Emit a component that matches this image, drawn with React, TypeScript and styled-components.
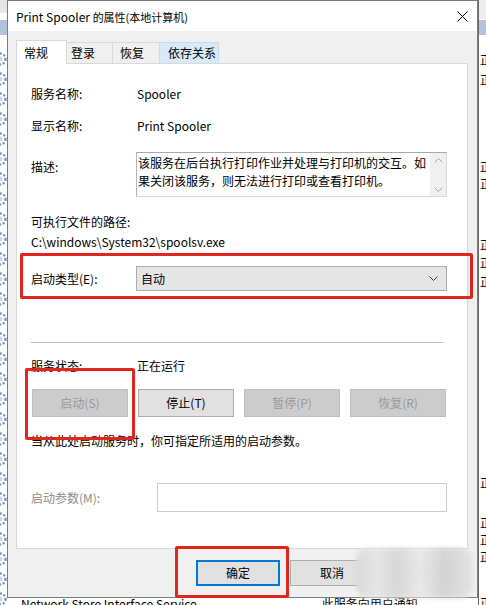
import React from "react";
import styled, { createGlobalStyle } from "styled-components";

const FONT = `"Noto Sans CJK SC", "Noto Sans", sans-serif`;

const Global = createGlobalStyle`
  html, body { margin: 0; padding: 0; background: #ffffff; overflow: hidden; }
  body { font-family: ${FONT}; font-size: 12px; color: #000; }
  * { box-sizing: border-box; }
`;

const Screen = styled.div`
  position: relative;
  width: 486px;
  height: 605px;
  display: grid;
  grid-template-columns: 7px 471px 8px;
  grid-template-rows: 598px 7px;
  overflow: hidden;
  background: #fff;
`;

/* ---------- background window strips ---------- */
const LeftStrip = styled.div`
  grid-column: 1;
  grid-row: 1 / span 2;
  display: flex;
  flex-direction: column;
  overflow: hidden;
  background: #fff;
`;
const StripTop = styled.div`
  height: 13px;
  background: #e6e6e6;
  flex: none;
`;
const StripHeader = styled.div<{ $mt: number }>`
  margin-top: ${(p) => p.$mt}px;
  height: 15px;
  background: #b3c4da;
  flex: none;
`;
const GearRow = styled.div<{ $first?: boolean }>`
  height: 20px;
  flex: none;
  display: flex;
  align-items: center;
  margin-top: ${(p) => (p.$first ? 14 : 0)}px;
  svg { margin-left: -8px; flex: none; }
`;
const RightStrip = styled.div`
  grid-column: 3;
  grid-row: 1 / span 2;
  display: flex;
  flex-direction: column;
  overflow: hidden;
  background: #fff;
  border-left: 1px solid #6b6b6b;
`;
const RightTop = styled.div`
  height: 19px;
  background: #ededed;
  flex: none;
`;
const Glyph = styled.div<{ $mt: number }>`
  margin-top: ${(p) => p.$mt}px;
  height: 16px;
  line-height: 16px;
  flex: none;
  padding-left: 1px;
  white-space: nowrap;
  font-size: 12px;
  overflow: hidden;
`;
const BottomStrip = styled.div`
  grid-column: 2;
  grid-row: 2;
  display: flex;
  align-items: flex-start;
  overflow: hidden;
  background: #fff;
  white-space: nowrap;
`;
const BottomText = styled.span<{ $ml: number }>`
  margin-top: -2px;
  margin-left: ${(p) => p.$ml}px;
  line-height: 16px;
  font-size: 12px;
  color: #000;
`;

/* ---------- dialog ---------- */
const Dialog = styled.div`
  grid-column: 2;
  grid-row: 1;
  display: flex;
  flex-direction: column;
  background: #f0f0f0;
  border: 1px solid #7d7d7d;
`;
const TitleBar = styled.div`
  height: 30px;
  flex: none;
  background: #ffffff;
  display: flex;
  align-items: center;
  padding: 0 9px 0 8px;
`;
const Title = styled.span`
  font-size: 12px;
  line-height: 16px;
  margin-top: 1px;
  white-space: nowrap;
`;
const TitleCjk = styled.span`
  font-size: 11px;
`;
const CloseBtn = styled.span`
  margin-left: auto;
  display: flex;
  width: 11px;
  height: 11px;
`;
const Body = styled.div`
  flex: 1;
  display: flex;
  flex-direction: column;
  padding: 9px 9px 0 8px;
`;
const TabRow = styled.div`
  display: flex;
  align-items: flex-end;
  height: 24px;
  margin-bottom: -1px;
  position: relative;
  z-index: 1;
`;
const Tab = styled.div<{ $w: number; $pl: number; $active?: boolean; $hover?: boolean }>`
  width: ${(p) => p.$w}px;
  padding-left: ${(p) => p.$pl}px;
  height: ${(p) => (p.$active ? 24 : 22)}px;
  display: flex;
  align-items: center;
  font-size: 12px;
  line-height: 16px;
  border: 1px solid ${(p) => (p.$hover ? "#c3dcf2" : "#d9d9d9")};
  border-bottom: ${(p) => (p.$active ? "none" : "1px solid #d9d9d9")};
  background: ${(p) => (p.$active ? "#ffffff" : p.$hover ? "#d8eaf9" : "#f0f0f0")};
  margin-right: ${(p) => (p.$active ? -3 : -1)}px;
  position: relative;
  z-index: ${(p) => (p.$active ? 2 : 1)};
`;
const Panel = styled.div`
  height: 486px;
  flex: none;
  background: #ffffff;
  border: 1px solid #d9d9d9;
  display: flex;
  flex-direction: column;
  padding-left: 14px;
`;
const Row = styled.div<{ $mt: number; $h?: number }>`
  margin-top: ${(p) => p.$mt}px;
  height: ${(p) => p.$h ?? 16}px;
  display: flex;
  align-items: ${(p) => (p.$h ? "flex-start" : "center")};
  line-height: 16px;
  white-space: nowrap;
`;
const Label = styled.span<{ $w: number; $pt?: number; $muted?: boolean }>`
  width: ${(p) => p.$w}px;
  flex: none;
  padding-top: ${(p) => p.$pt ?? 0}px;
  color: ${(p) => (p.$muted ? "#8c8c8c" : "#000")};
`;
const PlainText = styled.div<{ $mt: number }>`
  margin-top: ${(p) => p.$mt}px;
  height: 16px;
  line-height: 16px;
  white-space: nowrap;
`;
const DescBox = styled.div`
  width: 311px;
  height: 45px;
  display: flex;
  border: 1px solid #dadada;
  border-top-color: #a9a9a9;
  border-left-color: #b5b5b5;
  background: #fff;
`;
const DescText = styled.div`
  flex: 1;
  padding: 1px 0 0 1px;
  line-height: 18px;
  font-size: 12px;
  white-space: nowrap;
  overflow: hidden;
`;
const ScrollBar = styled.div`
  width: 16px;
  flex: none;
  background: #f0f0f0;
  display: flex;
  flex-direction: column;
  align-items: center;
  justify-content: space-between;
  padding: 5px 0 4px;
`;
const Combo = styled.div`
  width: 311px;
  height: 25px;
  display: flex;
  align-items: center;
  padding: 0 8px 0 4px;
  background: #e5e5e5;
  border: 1px solid #adadad;
`;
const ComboText = styled.span`
  line-height: 16px;
`;
const ComboArrow = styled.span`
  margin-left: auto;
  display: flex;
`;
const Separator = styled.div`
  margin-top: 51px;
  width: 412px;
  height: 1px;
  background: #bcbcbc;
  flex: none;
`;
const ButtonRow = styled.div`
  margin-top: 15px;
  padding-left: 1px;
  display: flex;
  gap: 10px;
`;
const Button = styled.div<{ $w: number; $h: number; $disabled?: boolean; $default?: boolean }>`
  width: ${(p) => p.$w}px;
  height: ${(p) => p.$h}px;
  display: flex;
  align-items: center;
  justify-content: center;
  font-size: 12px;
  line-height: 16px;
  color: ${(p) => (p.$disabled ? "#9a9a9a" : "#000")};
  background: ${(p) => (p.$disabled ? "#cccccc" : "#e1e1e1")};
  border: ${(p) =>
    p.$default ? "2px solid #0078d7" : p.$disabled ? "1px solid #bfbfbf" : "1px solid #adadad"};
`;
const ParamInput = styled.div`
  width: 290px;
  height: 29px;
  border: 1px solid #cccccc;
  background: #fff;
`;
const Footer = styled.div`
  display: flex;
  justify-content: flex-end;
  gap: 10px;
  padding-top: 11px;
`;

/* ---------- overlays ---------- */
const RedBox = styled.div<{ $x: number; $y: number; $w: number; $h: number }>`
  position: absolute;
  left: ${(p) => p.$x}px;
  top: ${(p) => p.$y}px;
  width: ${(p) => p.$w}px;
  height: ${(p) => p.$h}px;
  border: 3px solid #e0261f;
  border-radius: 2px;
  pointer-events: none;
`;
const Blur = styled.div`
  position: absolute;
  left: 356px;
  top: 548px;
  width: 117px;
  height: 50px;
  border-radius: 12px;
  background: linear-gradient(
    90deg,
    #dadada 0%,
    #e6e6e6 18%,
    #d8d8d8 35%,
    #e9e9e9 55%,
    #d4d4d4 75%,
    #e3e3e3 100%
  );
  filter: blur(2px);
  opacity: 0.97;
`;

const Gear = () => (
  <svg width="16" height="16" viewBox="0 0 16 16">
    <circle cx="8" cy="8" r="5.5" fill="none" stroke="#7f97b5" strokeWidth="2.4" strokeDasharray="2 1.6" />
    <circle cx="8" cy="8" r="2.5" fill="#c9d6e6" />
  </svg>
);

const Chevron = ({ up, color }: { up?: boolean; color: string }) => (
  <svg width="9" height="5" viewBox="0 0 9 5">
    <polyline
      points={up ? "0.5,4.5 4.5,0.5 8.5,4.5" : "0.5,0.5 4.5,4.5 8.5,0.5"}
      fill="none"
      stroke={color}
      strokeWidth="1"
    />
  </svg>
);

const glyphRows = [17, 4, 71, 1, 45, 2, 3, 185, 24, 1, 1, 30];

export default function App() {
  return (
    <>
      <Global />
      <Screen>
        <LeftStrip>
          <StripTop />
          <StripHeader $mt={7} />
          {Array.from({ length: 28 }).map((_, i) => (
            <GearRow key={i} $first={i === 0}>
              <Gear />
            </GearRow>
          ))}
        </LeftStrip>

        <Dialog>
          <TitleBar>
            <Title>
              Print Spooler <TitleCjk>的属性(本地计算机)</TitleCjk>
            </Title>
            <CloseBtn>
              <svg width="11" height="11" viewBox="0 0 11 11">
                <path d="M0.5 0.5 L10.5 10.5 M10.5 0.5 L0.5 10.5" stroke="#000" strokeWidth="1" />
              </svg>
            </CloseBtn>
          </TitleBar>
          <Body>
            <TabRow>
              <Tab $w={51} $pl={7} $active>常规</Tab>
              <Tab $w={49} $pl={6}>登录</Tab>
              <Tab $w={48} $pl={7}>恢复</Tab>
              <Tab $w={60} $pl={8} $hover>依存关系</Tab>
            </TabRow>
            <Panel>
              <Row $mt={22}>
                <Label $w={106}>服务名称:</Label>
                <span>Spooler</span>
              </Row>
              <Row $mt={16}>
                <Label $w={106}>显示名称:</Label>
                <span>Print Spooler</span>
              </Row>
              <Row $mt={18} $h={45}>
                <Label $w={105} $pt={7}>描述:</Label>
                <DescBox>
                  <DescText>
                    该服务在后台执行打印作业并处理与打印机的交互。如
                    <br />
                    果关闭该服务，则无法进行打印或查看打印机。
                  </DescText>
                  <ScrollBar>
                    <Chevron up color="#a6a6a6" />
                    <Chevron color="#a6a6a6" />
                  </ScrollBar>
                </DescBox>
              </Row>
              <PlainText $mt={17}>可执行文件的路径:</PlainText>
              <PlainText $mt={4}>C:\windows\System32\spoolsv.exe</PlainText>
              <Row $mt={16} $h={25}>
                <Label $w={105} $pt={5}>启动类型(E):</Label>
                <Combo>
                  <ComboText>自动</ComboText>
                  <ComboArrow>
                    <Chevron color="#444" />
                  </ComboArrow>
                </Combo>
              </Row>
              <Separator />
              <Row $mt={15}>
                <Label $w={106}>服务状态:</Label>
                <span>正在运行</span>
              </Row>
              <ButtonRow>
                <Button $w={96} $h={28} $disabled>启动(S)</Button>
                <Button $w={96} $h={28}>停止(T)</Button>
                <Button $w={96} $h={28} $disabled>暂停(P)</Button>
                <Button $w={96} $h={28} $disabled>恢复(R)</Button>
              </ButtonRow>
              <PlainText $mt={16}>当从此处启动服务时，你可指定所适用的启动参数。</PlainText>
              <Row $mt={34} $h={29}>
                <Label $w={126} $pt={7} $muted>启动参数(M):</Label>
                <ParamInput />
              </Row>
            </Panel>
            <Footer>
              <Button $w={84} $h={26} $default>确定</Button>
              <Button $w={84} $h={26}>取消</Button>
              <Button $w={84} $h={26} $disabled>应用(A)</Button>
            </Footer>
          </Body>
        </Dialog>

        <RightStrip>
          <RightTop />
          <StripHeader $mt={1} />
          {glyphRows.map((mt, i) => (
            <Glyph key={i} $mt={mt}>正</Glyph>
          ))}
        </RightStrip>

        <BottomStrip>
          <BottomText $ml={14}>Network Store Interface Service</BottomText>
          <BottomText $ml={125}>此服务向用户通知...</BottomText>
        </BottomStrip>

        <RedBox $x={20} $y={253} $w={453} $h={46} />
        <RedBox $x={25} $y={368} $w={110} $h={72} />
        <RedBox $x={175} $y={546} $w={114} $h={52} />
        <Blur />
      </Screen>
    </>
  );
}
